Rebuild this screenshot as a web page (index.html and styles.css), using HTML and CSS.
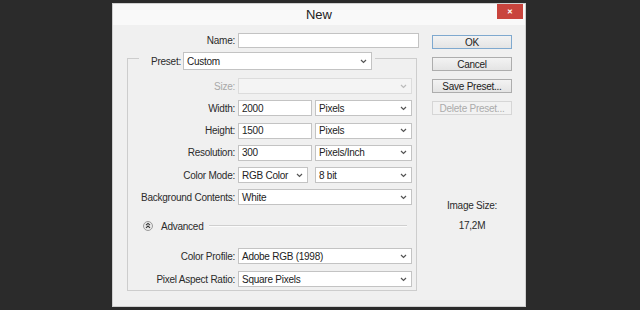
FILE: index.html
```html
<!DOCTYPE html>
<html lang="en">

<head>
    <meta charset="UTF-8">
    <meta name="viewport" content="width=device-width, initial-scale=1.0">
    <title>New</title>
    <link rel="stylesheet" href="styles.css">
</head>

<body>
    <div class="dialog">
        <div class="titlebar">
            <span class="title">New</span>
            <div class="close">&#x2715;</div>
        </div>

        <div class="main">
            <div class="form">
                <div class="name-row">
                    <label>Name:</label>
                    <div class="field"></div>
                </div>

                <div class="group">
                    <div class="preset">
                        <label>Preset:</label>
                        <div class="combo preset-combo">
                            <span>Custom</span>
                            <svg width="7" height="5" viewBox="0 0 7 5"><path d="M1 1l2.5 2.5L6 1" /></svg>
                        </div>
                    </div>

                    <div class="row first">
                        <label class="disabled">Size:</label>
                        <div class="combo full off">
                            <span></span>
                            <svg width="7" height="5" viewBox="0 0 7 5"><path d="M1 1l2.5 2.5L6 1" /></svg>
                        </div>
                    </div>
                    <div class="row">
                        <label>Width:</label>
                        <div class="field num">2000</div>
                        <div class="combo unit">
                            <span>Pixels</span>
                            <svg width="7" height="5" viewBox="0 0 7 5"><path d="M1 1l2.5 2.5L6 1" /></svg>
                        </div>
                    </div>
                    <div class="row">
                        <label>Height:</label>
                        <div class="field num">1500</div>
                        <div class="combo unit">
                            <span>Pixels</span>
                            <svg width="7" height="5" viewBox="0 0 7 5"><path d="M1 1l2.5 2.5L6 1" /></svg>
                        </div>
                    </div>
                    <div class="row">
                        <label>Resolution:</label>
                        <div class="field num">300</div>
                        <div class="combo unit">
                            <span>Pixels/Inch</span>
                            <svg width="7" height="5" viewBox="0 0 7 5"><path d="M1 1l2.5 2.5L6 1" /></svg>
                        </div>
                    </div>
                    <div class="row">
                        <label>Color Mode:</label>
                        <div class="combo mode">
                            <span>RGB Color</span>
                            <svg width="7" height="5" viewBox="0 0 7 5"><path d="M1 1l2.5 2.5L6 1" /></svg>
                        </div>
                        <div class="combo unit">
                            <span>8 bit</span>
                            <svg width="7" height="5" viewBox="0 0 7 5"><path d="M1 1l2.5 2.5L6 1" /></svg>
                        </div>
                    </div>
                    <div class="row">
                        <label>Background Contents:</label>
                        <div class="combo full">
                            <span>White</span>
                            <svg width="7" height="5" viewBox="0 0 7 5"><path d="M1 1l2.5 2.5L6 1" /></svg>
                        </div>
                    </div>

                    <div class="advanced">
                        <svg class="adv-icon" width="10" height="10" viewBox="0 0 10 10">
                            <circle cx="5" cy="5" r="4.5" />
                            <path d="M3 4.2l2-1.8 2 1.8M3 6.8l2-1.8 2 1.8" />
                        </svg>
                        <span>Advanced</span>
                        <div class="line"></div>
                    </div>

                    <div class="row profile">
                        <label>Color Profile:</label>
                        <div class="combo full">
                            <span>Adobe RGB (1998)</span>
                            <svg width="7" height="5" viewBox="0 0 7 5"><path d="M1 1l2.5 2.5L6 1" /></svg>
                        </div>
                    </div>
                    <div class="row tight">
                        <label>Pixel Aspect Ratio:</label>
                        <div class="combo full">
                            <span>Square Pixels</span>
                            <svg width="7" height="5" viewBox="0 0 7 5"><path d="M1 1l2.5 2.5L6 1" /></svg>
                        </div>
                    </div>
                </div>
            </div>

            <div class="side">
                <div class="btn default">OK</div>
                <div class="btn">Cancel</div>
                <div class="btn">Save Preset...</div>
                <div class="btn off">Delete Preset...</div>

                <div class="size-label">Image Size:</div>
                <div class="size-value">17,2M</div>
            </div>
        </div>
    </div>
</body>

</html>
```

FILE: styles.css
```css
body {
    margin: 0;
    height: 310px;
    overflow: hidden;
    background-color: #2b2b2b;
    font-family: "Liberation Sans", Arial, sans-serif;
    font-size: 10px;
    letter-spacing: -0.25px;
    color: #2b2b2b;
}

.dialog {
    width: 414px;
    height: 304px;
    margin: 3px 0 0 112px;
    box-sizing: border-box;
    border: 1px solid #cfcfcf;
    background-color: #f0f0f0;
    display: flex;
    flex-direction: column;
}

.titlebar {
    height: 21px;
    background-color: #f9f9f9;
    display: grid;
    grid-template-columns: 1fr auto 1fr;
    align-items: start;
}

.title {
    grid-column: 2;
    font-size: 13px;
    letter-spacing: 0;
    line-height: 21px;
    color: #222;
}

.close {
    grid-column: 3;
    justify-self: end;
    width: 26px;
    height: 15px;
    margin-right: 2px;
    background-color: #c9443d;
    color: #fff;
    font-size: 7px;
    font-weight: bold;
    display: flex;
    align-items: center;
    justify-content: center;
}

.main {
    display: flex;
    flex: 1;
}

.form {
    width: 305px;
}

label {
    text-align: right;
    white-space: nowrap;
}

.disabled {
    color: #a8a8a8;
}

.name-row {
    display: grid;
    grid-template-columns: 122px 181px;
    column-gap: 3px;
    align-items: center;
    margin-top: 8px;
}

.field,
.combo {
    height: 16px;
    box-sizing: border-box;
    border: 1px solid #c3c3c3;
    background-color: #fff;
    color: #222;
    display: flex;
    align-items: center;
}

.name-row .field {
    height: 15px;
}

.num {
    width: 74px;
    padding-left: 3px;
    margin-right: 3px;
}

.combo {
    justify-content: space-between;
    padding: 0 4px 0 3px;
}

.combo svg path {
    fill: none;
    stroke: #555;
    stroke-width: 1.2;
}

.combo.off {
    background-color: #f4f4f4;
    border-color: #dcdcdc;
}

.combo.off svg path {
    stroke: #bbb;
}

.full {
    width: 174px;
}

.unit {
    width: 97px;
}

.mode {
    width: 70px;
    margin-right: 7px;
}

.group {
    width: 290px;
    height: 233px;
    margin: 10px 0 0 14px;
    box-sizing: border-box;
    border: 1px solid #cdcdcd;
}

.preset {
    display: flex;
    align-items: center;
    width: fit-content;
    margin: -7px 0 0 11px;
    padding-right: 3px;
    background-color: #f0f0f0;
}

.preset label {
    width: 42px;
    margin-right: 2px;
}

.preset-combo {
    width: 189px;
    height: 18px;
}

.row {
    display: flex;
    align-items: center;
    height: 16px;
    margin-top: 6.25px;
}

.row label {
    width: 107px;
    margin-right: 3px;
}

.row.first {
    margin-top: 8px;
}

.row.profile {
    margin-top: 15px;
}

.row.tight {
    margin-top: 7px;
}

.advanced {
    display: flex;
    align-items: center;
    height: 14px;
    margin: 14px 9px 0 15px;
}

.adv-icon {
    margin-right: 8px;
}

.adv-icon circle {
    fill: #e9e9e9;
    stroke: #9a9a9a;
}

.adv-icon path {
    fill: none;
    stroke: #333;
    stroke-width: 1.1;
}

.line {
    flex: 1;
    margin-left: 6px;
    border-top: 1px solid #cfcfcf;
    border-bottom: 1px solid #fbfbfb;
}

.side {
    width: 80px;
    margin-left: 14px;
    padding-top: 10px;
    display: flex;
    flex-direction: column;
    align-items: center;
}

.btn {
    width: 80px;
    height: 14px;
    margin-bottom: 8px;
    box-sizing: border-box;
    border: 1px solid #adadad;
    background: linear-gradient(#f3f3f3, #e4e4e4);
    color: #222;
    display: flex;
    align-items: center;
    justify-content: center;
}

.btn.default {
    border-color: #7fa9cf;
}

.btn.off {
    border-color: #d6d6d6;
    background: #f2f2f2;
    color: #ababab;
}

.size-label {
    margin-top: 77px;
    line-height: 12px;
}

.size-value {
    margin-top: 8px;
    line-height: 12px;
}
```
